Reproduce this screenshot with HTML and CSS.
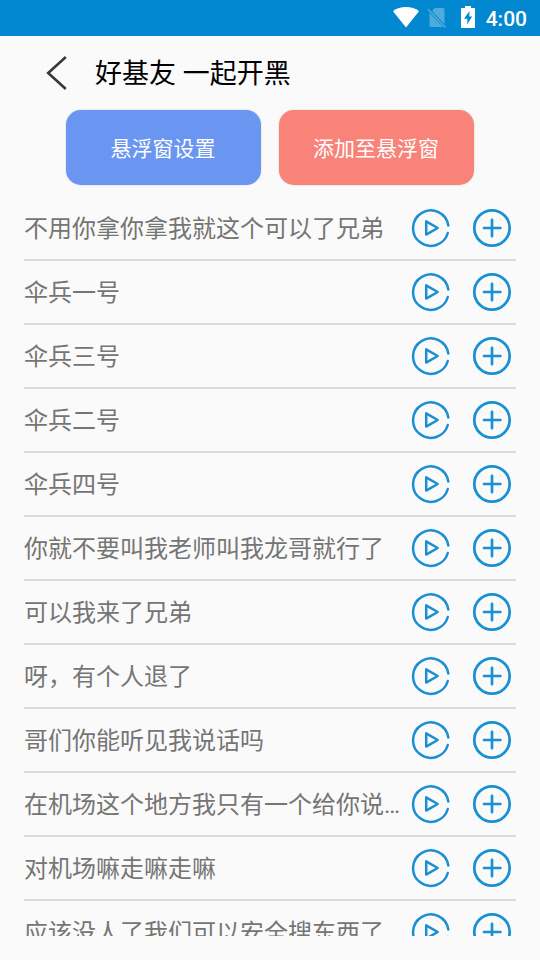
FILE: index.html
```html
<!DOCTYPE html>
<html lang="zh-CN">
<head>
<meta charset="utf-8">
<title>好基友 一起开黑</title>
<link rel="stylesheet" href="styles.css">
</head>
<body>
<svg class="defs" width="0" height="0">
  <symbol id="play" viewBox="0 0 40 40">
    <path d="M37.300 17.600A17.700 17.700 0 1 0 36.800 25" stroke-width="2.500"/>
    <path d="M15.200 13.400V26.600L26.700 20Z" stroke-width="2.500"/>
  </symbol>
  <symbol id="add" viewBox="0 0 40 40">
    <circle cx="20" cy="20" r="17.700" stroke-width="2.800"/>
    <path d="M12 20H28.400M20 11.800V28.200" stroke-width="2.700"/>
  </symbol>
</svg>
<header class="status">
  <svg class="wifi" width="26" height="21" viewBox="0 0 26 21"><path d="M0 4.200C3.500 1.400 8 0 13 0s9.500 1.400 13 4.200L13 20.500Z" fill="#fff"/></svg>
  <svg class="sim" width="20" height="22" viewBox="0 0 20 22"><path d="M8 1H16Q17.500 1 17.500 2.500V17.500L4.800 4.300ZM2.500 6L16 20H4Q2.500 20 2.500 18.500Z" fill="#4faade"/><path d="M1 2.300L18.500 20.500" stroke="#55addf" stroke-width="1.600"/><path d="M3 2.500L18.500 18.600" stroke="#0288d1" stroke-width="1"/></svg>
  <svg class="battery" width="14" height="22" viewBox="0 0 14 22"><path d="M4 0H10V2H14V22H0V2H4Z" fill="#fff"/><path d="M8.500 5L3 12.800H6.300V18.300L11.200 10.500H8.300Z" fill="#0288d1"/></svg>
  <span class="clock">4:00</span>
</header>
<div class="titlebar">
  <svg class="back" width="22" height="36" viewBox="0 0 22 36"><path d="M19.800 2L2.200 18L19.800 34" fill="none" stroke="#383838" stroke-width="2.600"/></svg>
  <h1>好基友 一起开黑</h1>
</div>
<div class="actions">
  <button class="btn blue">悬浮窗设置</button>
  <button class="btn red">添加至悬浮窗</button>
</div>
<ul class="list">
  <li><span>不用你拿你拿我就这个可以了兄弟</span><svg class="play"><use href="#play"/></svg><svg><use href="#add"/></svg></li>
  <li><span>伞兵一号</span><svg class="play"><use href="#play"/></svg><svg><use href="#add"/></svg></li>
  <li><span>伞兵三号</span><svg class="play"><use href="#play"/></svg><svg><use href="#add"/></svg></li>
  <li><span>伞兵二号</span><svg class="play"><use href="#play"/></svg><svg><use href="#add"/></svg></li>
  <li><span>伞兵四号</span><svg class="play"><use href="#play"/></svg><svg><use href="#add"/></svg></li>
  <li><span>你就不要叫我老师叫我龙哥就行了</span><svg class="play"><use href="#play"/></svg><svg><use href="#add"/></svg></li>
  <li><span>可以我来了兄弟</span><svg class="play"><use href="#play"/></svg><svg><use href="#add"/></svg></li>
  <li><span>呀，有个人退了</span><svg class="play"><use href="#play"/></svg><svg><use href="#add"/></svg></li>
  <li><span>哥们你能听见我说话吗</span><svg class="play"><use href="#play"/></svg><svg><use href="#add"/></svg></li>
  <li><span>在机场这个地方我只有一个给你说…</span><svg class="play"><use href="#play"/></svg><svg><use href="#add"/></svg></li>
  <li><span>对机场嘛走嘛走嘛</span><svg class="play"><use href="#play"/></svg><svg><use href="#add"/></svg></li>
  <li><span>应该没人了我们可以安全搜东西了</span><svg class="play"><use href="#play"/></svg><svg><use href="#add"/></svg></li>
</ul>
</body>
</html>
```
FILE: styles.css
```css
* { box-sizing: border-box; }
body {
  margin: 0;
  width: 540px;
  height: 960px;
  overflow: hidden;
  background: #fafafa;
  font-family: Roboto, "Noto Sans CJK SC", sans-serif;
}
.defs { display: block; }
.status {
  height: 36px;
  padding-right: 13px;
  background: #0288d1;
  display: flex;
  justify-content: flex-end;
  align-items: center;
}
.wifi { margin: -1px 8px 0 0; }
.sim { margin: 0 14px 0 0; }
.battery { margin: -2px 11px 0 0; }
.clock {
  padding-top: 2px;
  color: #fff;
  font-size: 21px;
  font-weight: 500;
  line-height: 36px;
}
.titlebar {
  height: 74px;
  padding-left: 46px;
  display: flex;
  align-items: center;
}
.back { margin-right: 27px; }
h1 {
  margin: 0;
  padding-top: 2px;
  color: #000;
  font-size: 27px;
  font-weight: 400;
  line-height: 40px;
}
.actions {
  height: 75px;
  padding-left: 66px;
  display: flex;
  gap: 18px;
}
.btn {
  width: 195px;
  height: 75px;
  padding: 0 1px 2px 0;
  border: 0;
  border-radius: 15px;
  box-shadow: 0 0 2px rgba(0, 0, 0, .2);
  color: #fff;
  font: inherit;
  font-size: 21px;
}
.blue { background: #6a95f0; }
.red { background: #f98279; }
.list {
  height: 739px;
  margin: 12px 24px 0;
  padding: 0;
  overflow: hidden;
  list-style: none;
}
.list li {
  height: 64px;
  border-bottom: 2px solid #dadada;
  display: flex;
  align-items: center;
}
.list span {
  width: 387px;
  padding-top: 2px;
  color: #757575;
  font-size: 24px;
  line-height: 36px;
  white-space: nowrap;
}
.list svg {
  width: 40px;
  height: 40px;
  flex: none;
  fill: none;
  stroke: #1a90d3;
  stroke-linecap: round;
  stroke-linejoin: round;
}
.list .play { margin-right: 21px; }
```
